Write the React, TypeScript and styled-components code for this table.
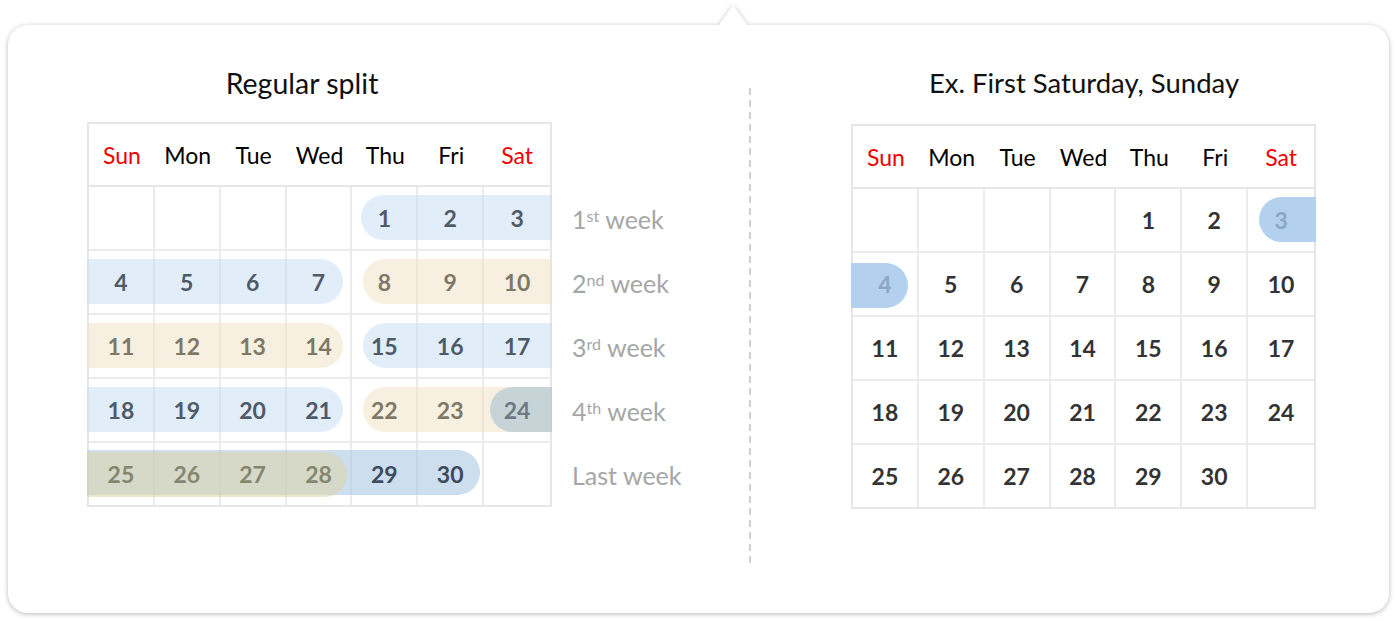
import React from "react";
import styled, { createGlobalStyle } from "styled-components";

const GlobalStyle = createGlobalStyle`
  html, body { margin: 0; padding: 0; background: #ffffff; }
  body { padding: 8px; font-family: "Lato", "Liberation Sans", sans-serif; }
  * { box-sizing: border-box; }
`;

const Frame = styled.div`
  position: relative;
  width: 1381px;
  margin-top: 17px;
  filter: drop-shadow(0 1px 2.5px rgba(0, 0, 0, 0.28));
`;

const Arrow = styled.div`
  position: absolute;
  top: -20px;
  left: 710px;
  width: 30px;
  height: 21px;
  background: #ffffff;
  clip-path: polygon(50% 0, 100% 100%, 0 100%);
`;

const Card = styled.div`
  height: 588px;
  background: #ffffff;
  border-radius: 20px;
  display: flex;
  align-items: flex-start;
  padding: 41px 0 0 79px;
`;

const Section = styled.div<{ $width: number; $offset?: number }>`
  width: ${(p) => p.$width}px;
  margin-left: ${(p) => p.$offset ?? 0}px;
  display: flex;
  flex-direction: column;
`;

const Title = styled.div<{ $width: number; $gap: number; $size: number }>`
  width: ${(p) => p.$width}px;
  text-align: center;
  font-size: ${(p) => p.$size}px;
  line-height: 34px;
  color: #111111;
  margin-bottom: ${(p) => p.$gap}px;
`;

const Divider = styled.div`
  width: 2px;
  height: 479px;
  margin-top: 22px;
  background: repeating-linear-gradient(
    to bottom,
    #cfcfcf 0 7px,
    transparent 7px 12px
  );
`;

const CalRow = styled.div`
  display: flex;
  align-items: flex-start;
`;

const Table = styled.div`
  width: 465px;
  border: 2px solid #e6e6e6;
`;

const HeaderRow = styled.div`
  display: grid;
  grid-template-columns: repeat(7, 1fr);
  height: 63px;
  border-bottom: 2px solid #e6e6e6;
`;

const HeadCell = styled.div<{ $weekend: boolean }>`
  display: flex;
  align-items: center;
  justify-content: center;
  font-size: 23px;
  color: ${(p) => (p.$weekend ? "#f20000" : "#000000")};
`;

const WeekRow = styled.div<{ $last: boolean }>`
  position: relative;
  display: grid;
  grid-template-columns: repeat(7, 1fr);
  height: ${(p) => (p.$last ? 62 : 64)}px;
  border-bottom: ${(p) => (p.$last ? "none" : "2px solid #ebebeb")};
`;

const DayCell = styled.div<{ $last: boolean }>`
  display: flex;
  align-items: center;
  justify-content: center;
  border-right: ${(p) => (p.$last ? "none" : "2px solid #ebebeb")};
`;

const DayNum = styled.span<{ $color: string }>`
  position: relative;
  z-index: 2;
  font-size: 23px;
  font-weight: 700;
  color: ${(p) => p.$color};
`;

const Bar = styled.div<{ $color: string; $roundLeft: boolean; $roundRight: boolean }>`
  position: absolute;
  z-index: 1;
  height: 45px;
  background: ${(p) => p.$color};
  border-radius: ${(p) =>
    `${p.$roundLeft ? 23 : 0}px ${p.$roundRight ? 23 : 0}px ${p.$roundRight ? 23 : 0}px ${p.$roundLeft ? 23 : 0}px`};
`;

const Labels = styled.div`
  display: flex;
  flex-direction: column;
  margin-left: 20px;
  padding-top: 65px;
`;

const Label = styled.div`
  height: 64px;
  display: flex;
  align-items: center;
  font-size: 25px;
  color: #a6a6a6;
  white-space: nowrap;
`;

const Sup = styled.sup`
  font-size: 16px;
  line-height: 0;
  position: relative;
  top: -3px;
  margin-right: 6px;
`;

type BarSpec = {
  left: number;
  right: number;
  color: string;
  rl: boolean;
  rr: boolean;
  top?: number;
};

const DAYS = ["Sun", "Mon", "Tue", "Wed", "Thu", "Fri", "Sat"];

const BLUE = "rgba(195, 219, 241, 0.5)";
const BEIGE = "rgba(239, 225, 195, 0.5)";
const BLUE_MID = "rgba(172, 200, 227, 0.6)";
const BEIGE_OVER = "rgba(223, 210, 162, 0.5)";
const SLATE = "rgba(166, 194, 208, 0.6)";

const T_BLUE = "#4f5a67";
const T_BEIGE = "#7e7867";
const T_SLATE = "#6c7884";
const T_OLIVE = "#85866f";
const T_DEEP = "#3d4b5c";

const weeks: number[][] = [
  [0, 0, 0, 0, 1, 2, 3],
  [4, 5, 6, 7, 8, 9, 10],
  [11, 12, 13, 14, 15, 16, 17],
  [18, 19, 20, 21, 22, 23, 24],
  [25, 26, 27, 28, 29, 30, 0],
];

const leftColor = (n: number): string => {
  if (n <= 7) return T_BLUE;
  if (n <= 14) return T_BEIGE;
  if (n <= 21) return T_BLUE;
  if (n <= 23) return T_BEIGE;
  if (n === 24) return T_SLATE;
  if (n <= 28) return T_OLIVE;
  return T_DEEP;
};

const leftBars: BarSpec[][] = [
  [{ left: 272, right: 463, color: BLUE, rl: true, rr: false }],
  [
    { left: -2, right: 254, color: BLUE, rl: false, rr: true },
    { left: 274, right: 463, color: BEIGE, rl: true, rr: false },
  ],
  [
    { left: -2, right: 254, color: BEIGE, rl: false, rr: true },
    { left: 274, right: 463, color: BLUE, rl: true, rr: false },
  ],
  [
    { left: -2, right: 254, color: BLUE, rl: false, rr: true },
    { left: 274, right: 463, color: BEIGE, rl: true, rr: false },
    { left: 401, right: 463, color: SLATE, rl: true, rr: false },
  ],
  [
    { left: -2, right: 391, color: BLUE_MID, rl: false, rr: true, top: -1 },
    { left: -2, right: 258, color: BEIGE_OVER, rl: false, rr: true, top: 1 },
  ],
];

const HL = "#b3d1ee";
const rightBars: BarSpec[][] = [
  [{ left: 406, right: 463, color: HL, rl: true, rr: false }],
  [{ left: -2, right: 55, color: HL, rl: false, rr: true, top: 2 }],
  [],
  [],
  [],
];

const rightColor = (n: number): string => (n === 3 || n === 4 ? "#8ba7c4" : "#333333");

type CalendarProps = {
  bars: BarSpec[][];
  colorOf: (n: number) => string;
};

const Calendar: React.FC<CalendarProps> = ({ bars, colorOf }) => (
  <Table>
    <HeaderRow>
      {DAYS.map((d, i) => (
        <HeadCell key={d} $weekend={i === 0 || i === 6}>
          {d}
        </HeadCell>
      ))}
    </HeaderRow>
    {weeks.map((week, wi) => (
      <WeekRow key={wi} $last={wi === weeks.length - 1}>
        {bars[wi].map((b, bi) => (
          <Bar
            key={bi}
            $color={b.color}
            $roundLeft={b.rl}
            $roundRight={b.rr}
            style={{
              left: b.left,
              width: b.right - b.left,
              top: 8 + (b.top ?? 0),
            }}
          />
        ))}
        {week.map((n, di) => (
          <DayCell key={di} $last={di === 6}>
            {n > 0 && <DayNum $color={colorOf(n)}>{n}</DayNum>}
          </DayCell>
        ))}
      </WeekRow>
    ))}
  </Table>
);

const weekLabels: Array<[string, string]> = [
  ["1", "st"],
  ["2", "nd"],
  ["3", "rd"],
  ["4", "th"],
];

export default function App() {
  return (
    <>
      <GlobalStyle />
      <Frame>
        <Arrow />
        <Card>
          <Section $width={662}>
            <Title $width={430} $gap={22} $size={28.5}>
              Regular split
            </Title>
            <CalRow>
              <Calendar bars={leftBars} colorOf={leftColor} />
              <Labels>
                {weekLabels.map(([num, suf]) => (
                  <Label key={num}>
                    {num}
                    <Sup>{suf}</Sup>week
                  </Label>
                ))}
                <Label>Last week</Label>
              </Labels>
            </CalRow>
          </Section>
          <Divider />
          <Section $width={466} $offset={100}>
            <Title $width={466} $gap={24} $size={27.5}>
              Ex. First Saturday, Sunday
            </Title>
            <Calendar bars={rightBars} colorOf={rightColor} />
          </Section>
        </Card>
      </Frame>
    </>
  );
}
